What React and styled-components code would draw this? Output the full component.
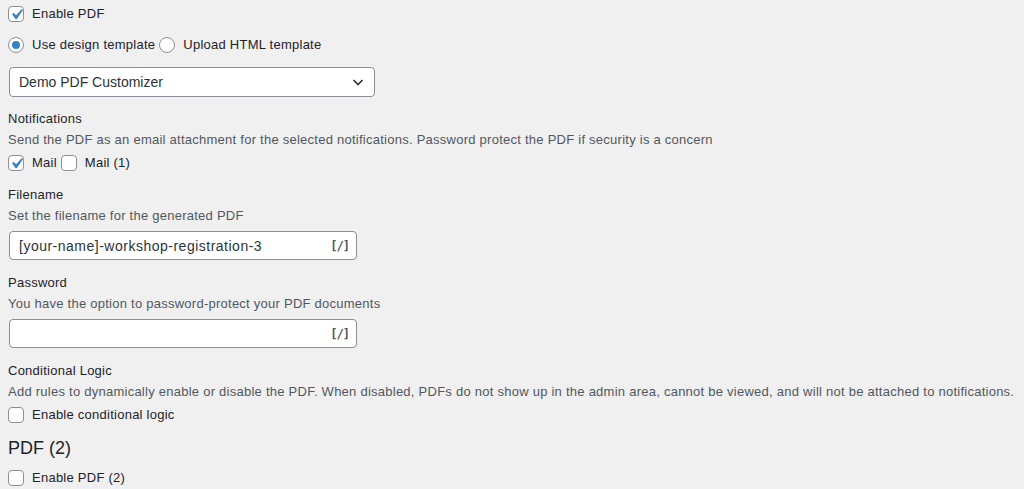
import React from 'react';
import styled, { createGlobalStyle } from 'styled-components';

const GlobalStyle = createGlobalStyle`
	html, body {
		margin: 0;
		padding: 0;
		background: #f0f0f1;
	}
	body {
		font-family: "Liberation Sans", Arial, sans-serif;
		font-size: 13px;
		color: #1d2327;
	}
`;

const Page = styled.div`
	display: flex;
	flex-direction: column;
	padding: 4px 8px 0;
	width: 1024px;
	box-sizing: border-box;
`;

const Row = styled.div`
	display: flex;
	align-items: center;
	height: 20px;
	margin-top: ${(p) => p.$mt || 0}px;
`;

const Choice = styled.label`
	display: flex;
	align-items: center;
	gap: 8px;
	margin-right: 4px;
	font-size: 13px;
	line-height: 20px;
	letter-spacing: 0.25px;
	color: #1d2327;
`;

const Box = styled.span`
	width: 16px;
	height: 16px;
	box-sizing: border-box;
	border: 1px solid #8c8f94;
	border-radius: ${(p) => (p.$round ? '50%' : '4px')};
	background: #fff;
	display: flex;
	align-items: center;
	justify-content: center;
	flex-shrink: 0;
	overflow: visible;

	svg {
		margin: -3px;
		flex-shrink: 0;
	}
`;

const Dot = styled.span`
	width: 8px;
	height: 8px;
	border-radius: 50%;
	background: #3582c4;
`;

const Label = styled.div`
	font-size: 13px;
	line-height: 20px;
	letter-spacing: 0.25px;
	color: #1d2327;
	margin-top: ${(p) => p.$mt || 0}px;
`;

const Description = styled.div`
	font-size: 13px;
	line-height: 20px;
	letter-spacing: 0.25px;
	color: #50575e;
	margin-top: 1px;
`;

const SelectBox = styled.div`
	display: flex;
	align-items: center;
	justify-content: space-between;
	width: 366px;
	height: 30px;
	box-sizing: border-box;
	margin: 12px 0 0 1px;
	padding: 0 8px 0 9px;
	background: #fff;
	border: 1px solid #8c8f94;
	border-radius: 4px;
	font-size: 14px;
	color: #2c3338;
`;

const TextInput = styled.div`
	display: flex;
	align-items: center;
	justify-content: space-between;
	width: 348px;
	height: 29px;
	box-sizing: border-box;
	margin: 5px 0 0 1px;
	padding: 0 7px 0 9px;
	background: #fff;
	border: 1px solid #8c8f94;
	border-radius: 4px;
	font-size: 14px;
	letter-spacing: 0.5px;
	color: #2c3338;
`;

const Tag = styled.span`
	font-family: "DejaVu Sans Mono", monospace;
	font-weight: 700;
	font-size: 12px;
	color: #50575e;
	letter-spacing: -1px;
`;

const Heading = styled.h2`
	margin: 11px 0 0;
	font-size: 18px;
	font-weight: 400;
	line-height: 24px;
	color: #1d2327;
`;

function Check({ checked, children }) {
	return (
		<Choice>
			<Box>
				{checked && (
					<svg width="21" height="21" viewBox="0 0 20 20">
						<path d="M14.83 4.89l1.34.94-5.81 8.38H9.02L5.78 9.67l1.34-1.25 2.57 2.4z" fill="#3582c4" />
					</svg>
				)}
			</Box>
			{children}
		</Choice>
	);
}

function Radio({ checked, children }) {
	return (
		<Choice>
			<Box $round>{checked && <Dot />}</Box>
			{children}
		</Choice>
	);
}

export default function App() {
	return (
		<>
			<GlobalStyle />
			<Page>
				<Row>
					<Check checked>Enable PDF</Check>
				</Row>
				<Row $mt={11}>
					<Radio checked>Use design template</Radio>
					<Radio>Upload HTML template</Radio>
				</Row>
				<SelectBox>
					<span>Demo PDF Customizer</span>
					<svg width="16" height="16" viewBox="0 0 16 16">
						<path d="M3.5 6l4.5 4.5L12.5 6" fill="none" stroke="#2c3338" strokeWidth="1.6" />
					</svg>
				</SelectBox>

				<Label $mt={12}>Notifications</Label>
				<Description>Send the PDF as an email attachment for the selected notifications. Password protect the PDF if security is a concern</Description>
				<Row $mt={3}>
					<Check checked>Mail</Check>
					<Check>Mail (1)</Check>
				</Row>

				<Label $mt={12}>Filename</Label>
				<Description>Set the filename for the generated PDF</Description>
				<TextInput>
					<span>[your-name]-workshop-registration-3</span>
					<Tag>[/]</Tag>
				</TextInput>

				<Label $mt={13}>Password</Label>
				<Description>You have the option to password-protect your PDF documents</Description>
				<TextInput>
					<span />
					<Tag>[/]</Tag>
				</TextInput>

				<Label $mt={13}>Conditional Logic</Label>
				<Description>Add rules to dynamically enable or disable the PDF. When disabled, PDFs do not show up in the admin area, cannot be viewed, and will not be attached to notifications.</Description>
				<Row $mt={3}>
					<Check>Enable conditional logic</Check>
				</Row>

				<Heading>PDF (2)</Heading>
				<Row $mt={8}>
					<Check>Enable PDF (2)</Check>
				</Row>
			</Page>
		</>
	);
}
